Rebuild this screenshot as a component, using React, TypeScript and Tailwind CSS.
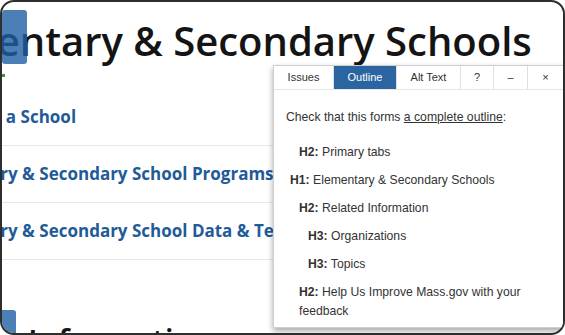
import React from "react";

type OutlineItem = {
  level: number;
  text: string;
};

const tabs = [
  { label: "Issues", w: "w-[60px]" },
  { label: "Outline", w: "w-[63px]", active: true },
  { label: "Alt Text", w: "w-[64px]" },
  { label: "?", w: "w-[33px]" },
  { label: "–", w: "w-[34px]" },
  { label: "×", w: "flex-1" },
];

const outline: OutlineItem[] = [
  { level: 2, text: "Primary tabs" },
  { level: 1, text: "Elementary & Secondary Schools" },
  { level: 2, text: "Related Information" },
  { level: 3, text: "Organizations" },
  { level: 3, text: "Topics" },
  { level: 2, text: "Help Us Improve Mass.gov with your feedback" },
];

const indent: Record<number, string> = {
  1: "pl-[4px]",
  2: "pl-[13px]",
  3: "pl-[22px]",
};

const links = [
  { text: "Find a School", ml: "ml-[-37px]" },
  { text: "Elementary & Secondary School Programs", ml: "ml-[-82px]" },
  { text: "Elementary & Secondary School Data & Testing", ml: "ml-[-82px]" },
];

const OutlinePanel: React.FC = () => (
  <div className="absolute left-[271px] top-[63px] w-[292px] h-[263px] border border-[#cfcfcf] bg-white shadow-[0_3px_6px_rgba(0,0,0,0.35)] font-['Liberation_Sans',Arial,sans-serif] text-[#333]">
    <div className="flex h-[24px] border-b border-[#e6e6e6] bg-white">
      {tabs.map((t) => (
        <div
          key={t.label}
          className={`${t.w} flex items-center justify-center border-r border-[#e0e0e0] text-[11px] ${
            t.active ? "bg-[#2b65a1] text-white" : "text-[#333]"
          }`}
        >
          {t.label}
        </div>
      ))}
    </div>
    <div className="pl-[12px] pr-[14px] pt-[17px] text-[12.2px]">
      <p className="leading-[21px]">
        Check that this forms <span className="underline">a complete outline</span>:
      </p>
      <ul className="mt-[15px] flex flex-col gap-[9px]">
        {outline.map((o, i) => (
          <li key={i} className={`${indent[o.level]} leading-[19px]`}>
            <span className="font-bold">H{o.level}:</span> {o.text}
          </li>
        ))}
      </ul>
    </div>
  </div>
);

const App: React.FC = () => {
  return (
    <div className="w-[565px] h-[335px] bg-white">
      <div className="relative h-full overflow-hidden rounded-[14px] border-2 border-[#2e2e2e] bg-white font-['Open_Sans',sans-serif]">
        <h1 className="mt-[15px] ml-[-100px] whitespace-nowrap text-[40px] font-semibold leading-[48px] text-[#141414]">
          Elementary &amp; Secondary Schools
        </h1>
        <div className="mt-[9px] h-[3px] w-[3px] bg-[#3a9a3a]" />
        <ul className="mt-[12px]">
          {links.map((l) => (
            <li key={l.text} className="flex h-[57px] items-center border-b border-[#e8e8e8] overflow-hidden">
              <span className={`${l.ml} whitespace-nowrap text-[17px] font-bold text-[#1f5b98]`}>{l.text}</span>
            </li>
          ))}
        </ul>
        <h2 className="mt-[61px] ml-[26px] whitespace-nowrap text-[32px] font-semibold leading-[40px] text-[#141414]">
          Information
        </h2>

        <div className="absolute left-0 top-[8px] h-[54px] w-[25px] rounded-[3px] bg-[#1f5fa3]/80" />
        <div className="absolute left-[-4px] top-[308px] h-[30px] w-[18px] rounded-[3px] bg-[#1f5fa3]/80" />

        <OutlinePanel />
      </div>
    </div>
  );
};

export default App;
